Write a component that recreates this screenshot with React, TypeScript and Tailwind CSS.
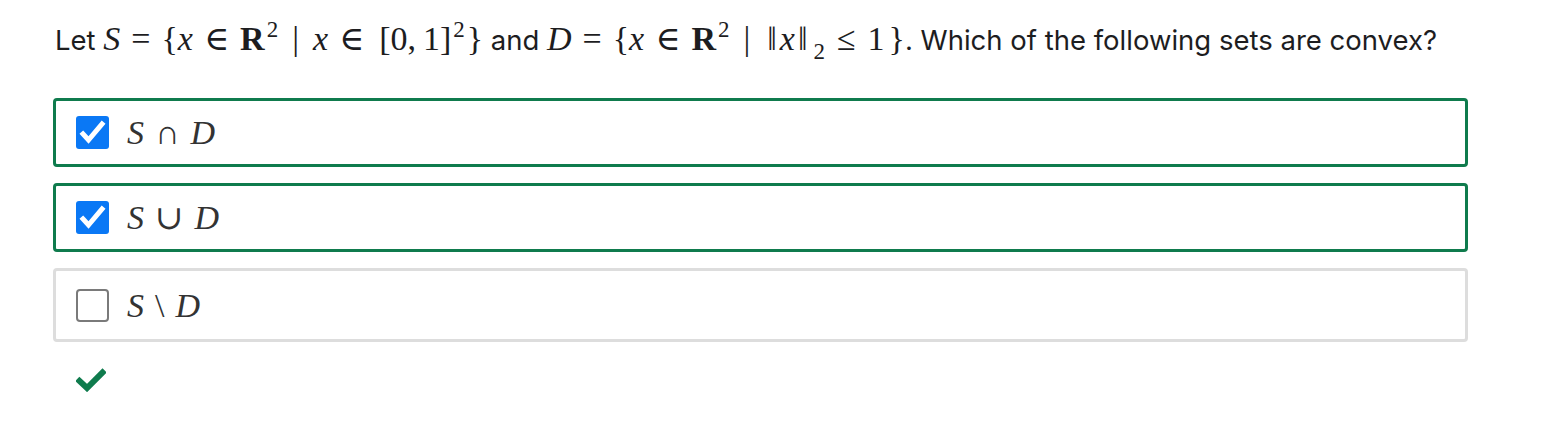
import React from "react";

const mathFont = { fontFamily: '"Liberation Serif", "DejaVu Serif", serif' };

function V({ children }: { children: React.ReactNode }) {
  return <span className="italic">{children}</span>;
}

function Rel({ children }: { children: React.ReactNode }) {
  return <span className="mx-[11px]">{children}</span>;
}

function Sup({ children }: { children: React.ReactNode }) {
  return <span className="relative top-[-13px] text-[23px] ml-[2px] leading-none">{children}</span>;
}

function Question() {
  return (
    <div className="h-[98px] pl-[55px] pt-[20px] text-[27.5px] text-[#1d1d1f] leading-[40px] whitespace-nowrap" style={{ fontFamily: 'Inter, "Noto Sans", sans-serif' }}>
      Let{" "}
      <span className="text-[34px] leading-none" style={mathFont}>
        <V>S</V>
        <Rel>=</Rel>
        <span>{"{"}</span>
        <V>x</V>
        <Rel>∈</Rel>
        <span className="font-bold">R</span>
        <Sup>2</Sup>
        <span className="mx-[14px]">|</span>
        <V>x</V>
        <Rel>∈</Rel>
        <span className="ml-[4px]">[0,&thinsp;1]</span>
        <Sup>2</Sup>
        <span className="ml-[2px]">{"}"}</span>
      </span>{" "}
      and{" "}
      <span className="text-[34px] leading-none" style={mathFont}>
        <V>D</V>
        <Rel>=</Rel>
        <span>{"{"}</span>
        <V>x</V>
        <Rel>∈</Rel>
        <span className="font-bold">R</span>
        <Sup>2</Sup>
        <span className="mx-[14px]">|</span>
        <span className="mx-[3px]">‖</span>
        <V>x</V>
        <span className="mx-[3px]">‖</span>
        <span className="relative top-[9px] text-[23px] ml-[3px] leading-none">2</span>
        <span className="mx-[12px]">≤</span>
        <span>1</span>
        <span className="ml-[4px]">{"}"}</span>
      </span>
      . Which of the following sets are convex?
    </div>
  );
}

function CheckBox({ checked }: { checked: boolean }) {
  if (checked) {
    return (
      <div className="w-[33px] h-[33px] rounded-[3px] bg-[#0a78f5] shrink-0">
        <svg width="33" height="33" viewBox="0 0 33 33">
          <path d="M7 18 L12.5 24 L26 8" fill="none" stroke="white" strokeWidth="5" strokeLinecap="square" strokeLinejoin="miter" />
        </svg>
      </div>
    );
  }
  return <div className="w-[33px] h-[33px] rounded-[4px] border-[2px] border-[#7a7a7a] bg-white shrink-0" />;
}

function Option({ checked, op, tall }: { checked: boolean; op: string; tall?: boolean }) {
  return (
    <div
      className={
        "w-[1415px] border-[3px] rounded-[4px] flex items-center gap-[18px] pl-[20px] " +
        (checked ? "border-[#0f7b4d] h-[69px]" : "border-[#dddddd] h-[74px]")
      }
    >
      <CheckBox checked={checked} />
      <span className={"text-[34px] text-[#333] leading-none " + (tall ? "mt-[2px]" : "")} style={mathFont}>
        <V>S</V>
        <span className="mx-[11px]">{op}</span>
        <V>D</V>
      </span>
    </div>
  );
}

export default function App() {
  return (
    <div className="w-[1561px] h-[427px] bg-white">
      <Question />
      <div className="pl-[53px] flex flex-col gap-[16px]">
        <Option checked={true} op="∩" />
        <Option checked={true} op="∪" />
        <Option checked={false} op="\" tall />
      </div>
      <div className="pl-[76px] mt-[26px]">
        <svg width="30" height="24" viewBox="0 0 30 24">
          <path d="M3.5 13 L11 20 L26.5 4.5" fill="none" stroke="#0f7b4d" strokeWidth="6" strokeLinecap="square" strokeLinejoin="miter" />
        </svg>
      </div>
    </div>
  );
}
